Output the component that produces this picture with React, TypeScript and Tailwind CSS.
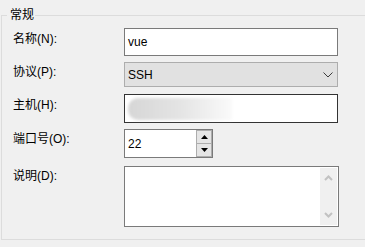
import React from "react";

const font = { fontFamily: '"Liberation Sans", "Noto Sans CJK SC", sans-serif' };

const Label: React.FC<{ text: string; className?: string }> = ({ text, className }) => (
    <div className={"w-[111px] shrink-0 text-[12px] leading-[17px] text-black " + (className || "")}>{text}</div>
);

const App: React.FC = () => {
    return (
        <div className="w-[365px] h-[247px] overflow-hidden bg-[#f0f0f0]" style={font}>
            <div className="pt-[15px] pl-[1px]">
                {/* 分组框 */}
                <div className="relative w-[380px] h-[225px] border-l border-t border-b border-[#dcdcdc]">
                    <span className="absolute -top-[9px] left-[5px] bg-[#f0f0f0] pl-[3px] pr-[1px] text-[12px] leading-[17px] text-black">
                        常规
                    </span>

                    <div className="flex flex-col pl-[11px] pt-[12px]">
                        {/* 名称 */}
                        <div className="flex items-center">
                            <Label text="名称(N):" className="pb-[6px]" />
                            <div className="w-[214px] h-[28px] bg-white border border-[#7a7a7a] flex items-center px-[3px] text-[12px]">
                                vue
                            </div>
                        </div>

                        {/* 协议 */}
                        <div className="flex items-center mt-[6px]">
                            <Label text="协议(P):" className="pb-[4px]" />
                            <div className="w-[214px] h-[25px] bg-[#e1e1e1] border border-[#adadad] flex items-center justify-between pl-[3px] pr-[4px] text-[12px]">
                                <span>SSH</span>
                                <svg width="10" height="6" viewBox="0 0 10 6" className="mt-[1px]">
                                    <polyline points="0.5,0.5 5,5 9.5,0.5" fill="none" stroke="#3c3c3c" strokeWidth="1" />
                                </svg>
                            </div>
                        </div>

                        {/* 主机 */}
                        <div className="flex items-center mt-[7px]">
                            <Label text="主机(H):" className="pb-[6px]" />
                            <div className="w-[214px] h-[29px] bg-white border border-[#333333] flex items-center px-[3px]">
                                <div className="w-[104px] h-[22px] rounded-l-[10px] bg-gradient-to-r from-[#d6d6d6] via-[#e4e4e4] to-[#fafafa] blur-[1.5px]" />
                            </div>
                        </div>

                        {/* 端口号 */}
                        <div className="flex items-center mt-[6px]">
                            <Label text="端口号(O):" className="pb-[8px]" />
                            <div className="w-[89px] h-[29px] bg-white border border-[#7a7a7a] flex items-stretch">
                                <div className="flex-1 flex items-center px-[3px] text-[12px]">22</div>
                                <div className="w-[16px] flex flex-col my-[0px]">
                                    <div className="flex-1 flex items-center justify-center bg-[#e5e5e5] border border-[#adadad]">
                                        <svg width="7" height="4" viewBox="0 0 7 4">
                                            <polygon points="3.5,0 7,4 0,4" fill="#000" />
                                        </svg>
                                    </div>
                                    <div className="flex-1 flex items-center justify-center bg-[#e5e5e5] border border-t-0 border-[#adadad]">
                                        <svg width="7" height="4" viewBox="0 0 7 4">
                                            <polygon points="0,0 7,0 3.5,4" fill="#000" />
                                        </svg>
                                    </div>
                                </div>
                            </div>
                        </div>

                        {/* 说明 */}
                        <div className="flex items-start mt-[8px]">
                            <Label text="说明(D):" className="mt-[2px]" />
                            <div className="w-[215px] h-[61px] bg-white border border-[#7a7a7a] flex justify-end p-[1px]">
                                <div className="w-[17px] h-full bg-[#f0f0f0] flex flex-col items-center justify-between py-[7px]">
                                    <svg width="9" height="6" viewBox="0 0 9 6">
                                        <polyline points="1,5 4.5,1.5 8,5" fill="none" stroke="#c2c2c2" strokeWidth="2" />
                                    </svg>
                                    <svg width="9" height="6" viewBox="0 0 9 6">
                                        <polyline points="1,1 4.5,4.5 8,1" fill="none" stroke="#c2c2c2" strokeWidth="2" />
                                    </svg>
                                </div>
                            </div>
                        </div>
                    </div>
                </div>
            </div>
        </div>
    );
};

export default App;
